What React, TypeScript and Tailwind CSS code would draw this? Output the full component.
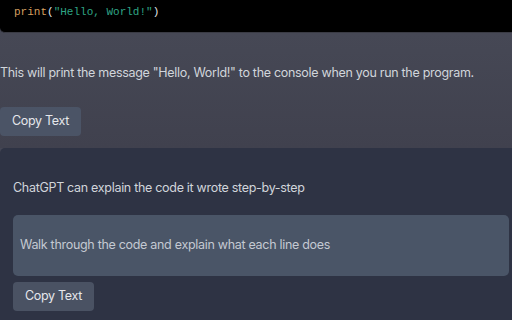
export default function App() {
  return (
    <div className="w-[512px] h-[320px] overflow-hidden bg-[#444654] font-['Inter','Liberation_Sans',sans-serif] text-[12.5px] tracking-[-0.3px] text-[#d1d5db]">
      <div className="h-[33px] bg-black rounded-bl-[5px] border-b border-[#3a3b44] pl-[14px] pt-[3px]">
        <pre className="font-['Liberation_Mono',monospace] text-[11px] leading-[18px] tracking-normal">
          <span className="text-[#d59f5f]">print</span>
          <span className="text-[#e5e7eb]">(</span>
          <span className="text-[#2fa585]">"Hello, World!"</span>
          <span className="text-[#e5e7eb]">)</span>
        </pre>
      </div>

      <div className="bg-gradient-to-b from-[#464855] to-[#40414e] pt-[31px] pb-[12px]">
        <p className="leading-[18px] whitespace-nowrap">
          This will print the message "Hello, World!" to the console when you run the program.
        </p>
        <button className="mt-[25px] h-[29px] w-[81px] rounded-[4px] bg-[#4b5466] text-[#e5e7eb] text-[12.5px] tracking-[-0.3px]">
          Copy Text
        </button>
      </div>

      <div className="bg-[#2e3344] rounded-tl-[5px] px-[13px] pt-[31px] h-[172px]">
        <p className="leading-[18px]">ChatGPT can explain the code it wrote step-by-step</p>
        <div className="mt-[18px] h-[61px] mr-[-10px] rounded-[5px] bg-[#4a5567] flex items-center px-[7px] text-[#c4c9d2]">
          Walk through the code and explain what each line does
        </div>
        <button className="mt-[6px] h-[29px] w-[81px] rounded-[4px] bg-[#4a5263] text-[#e5e7eb] text-[12.5px] tracking-[-0.3px]">
          Copy Text
        </button>
      </div>
    </div>
  );
}
